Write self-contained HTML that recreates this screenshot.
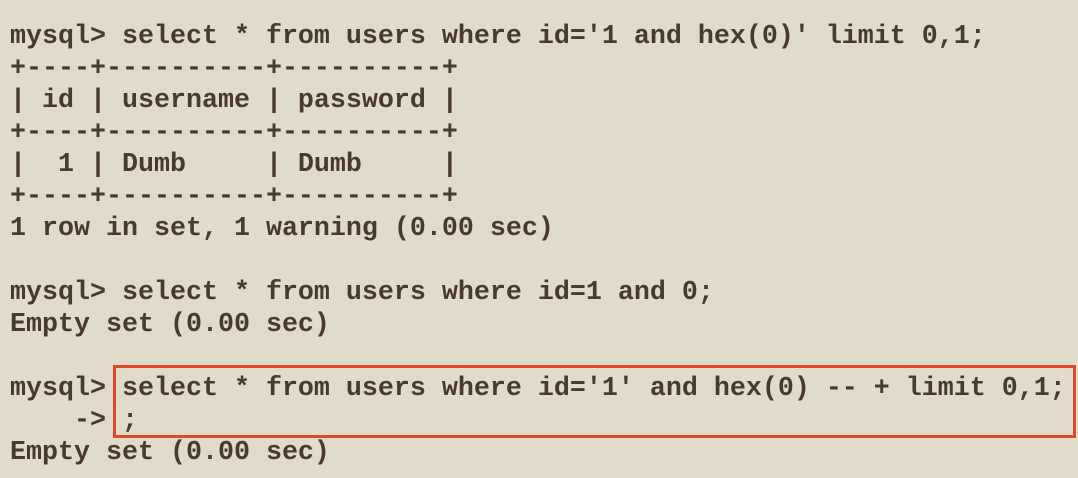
<!DOCTYPE html>
<html><head><style>
html,body{margin:0;padding:0;}
body{width:1078px;height:478px;background:#e1dcc9;overflow:hidden;position:relative;}
pre{position:absolute;left:10px;top:21px;margin:0;font-family:"Liberation Mono",monospace;font-size:26.67px;line-height:32px;color:#4a3a2e;font-weight:bold;letter-spacing:0;}
.box{position:absolute;left:113px;top:365px;width:957px;height:67px;border:3px solid #e0482e;}
</style></head><body>
<pre>mysql&gt; select * from users where id='1 and hex(0)' limit 0,1;
+----+----------+----------+
| id | username | password |
+----+----------+----------+
|  1 | Dumb     | Dumb     |
+----+----------+----------+
1 row in set, 1 warning (0.00 sec)

mysql&gt; select * from users where id=1 and 0;
Empty set (0.00 sec)

mysql&gt; select * from users where id='1' and hex(0) -- + limit 0,1;
    -&gt; ;
Empty set (0.00 sec)</pre>
<div class="box"></div>
</body></html>
